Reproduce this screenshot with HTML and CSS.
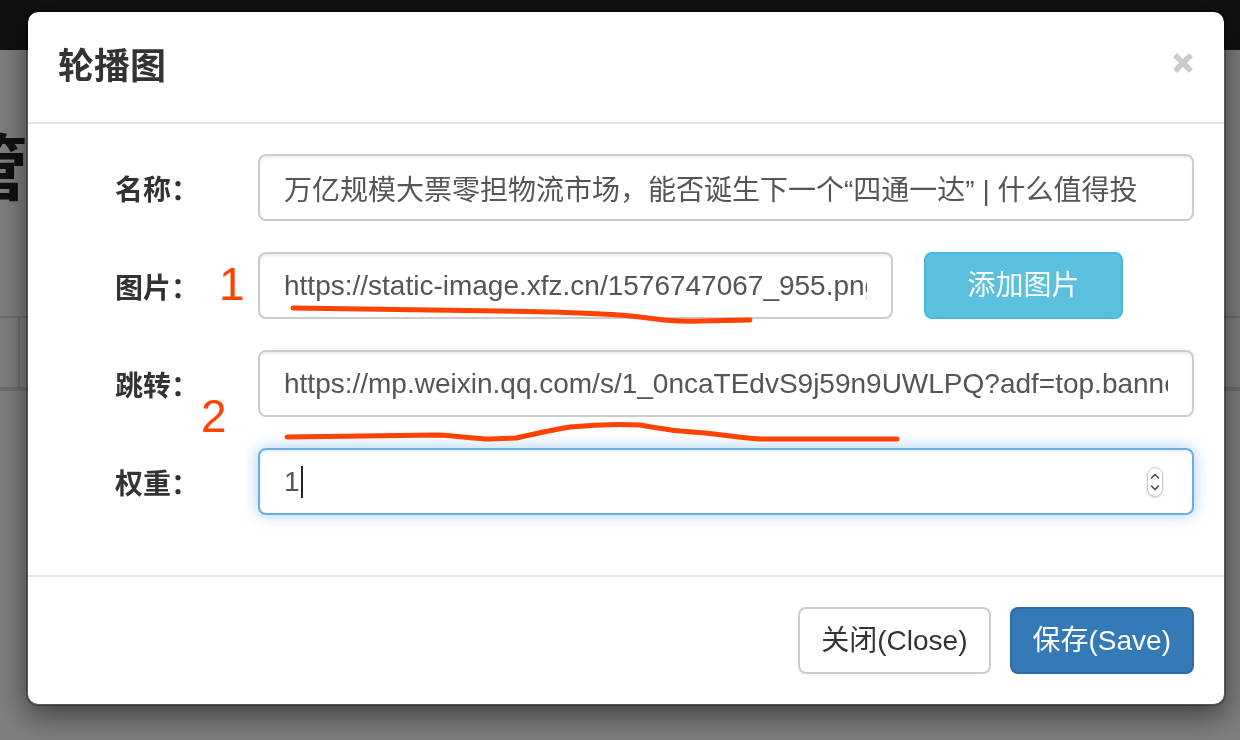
FILE: index.html
```html
<!DOCTYPE html>
<html lang="zh-CN">
<head>
<meta charset="utf-8">
<title>轮播图</title>
<link rel="stylesheet" href="styles.css">
</head>
<body>
<div class="page">
  <header class="navbar"></header>
  <main class="content">
    <h1 class="page-title">管</h1>
    <div class="grid-head">
      <div class="grid-cell first"></div>
      <div class="grid-cell"></div>
    </div>
  </main>
</div>

<div class="backdrop"></div>

<div class="modal" role="dialog">
  <div class="modal-header">
    <h4 class="modal-title">轮播图</h4>
    <button class="close" type="button" aria-label="Close">
      <svg width="22" height="22" viewBox="0 0 22 22"><path d="M3 3L19 19M19 3L3 19" stroke="#cbcbcb" stroke-width="5.4" fill="none"/></svg>
    </button>
  </div>
  <form class="modal-body">
    <div class="form-row">
      <label class="form-label">名称：</label>
      <input class="field" type="text" value="万亿规模大票零担物流市场，能否诞生下一个“四通一达” | 什么值得投" readonly>
    </div>
    <div class="form-row">
      <label class="form-label">图片：</label>
      <input class="field field-short" type="text" value="https://static-image.xfz.cn/1576747067_955.png" readonly>
      <button class="btn btn-info" type="button">添加图片</button>
    </div>
    <div class="form-row">
      <label class="form-label">跳转：</label>
      <input class="field" type="text" value="https://mp.weixin.qq.com/s/1_0ncaTEdvS9j59n9UWLPQ?adf=top.banner" readonly>
    </div>
    <div class="form-row">
      <label class="form-label">权重：</label>
      <div class="field field-focus">
        <span class="field-value">1</span><span class="caret"></span>
        <span class="spin">
          <svg width="18" height="32" viewBox="0 0 18 32">
            <rect x="1.5" y="1.5" width="15" height="29" rx="7.5" fill="#fff" stroke="#c9c9c9" stroke-width="1"/>
            <path d="M5.5 12L9 8.5L12.5 12M5.5 20L9 23.5L12.5 20" stroke="#4a4a4a" stroke-width="1.6" fill="none" stroke-linecap="round" stroke-linejoin="round"/>
          </svg>
        </span>
      </div>
    </div>
  </form>
  <div class="modal-footer">
    <button class="btn btn-default" type="button">关闭(Close)</button>
    <button class="btn btn-primary" type="button">保存(Save)</button>
  </div>
</div>

<svg class="marks" width="1240" height="740" viewBox="0 0 1240 740">
  <text class="mark-num" x="219" y="300">1</text>
  <text class="mark-num" x="201" y="432">2</text>
  <path d="M293 308 C360 309 430 310 500 311 C560 312 610 313 640 317 C660 320 680 322 700 321 L750 320" />
  <path d="M287 437 L438 435 C460 436 475 439 490 439 L516 438 C535 434 550 430 570 427 C590 425 620 424 640 425 C652 427 662 429 680 431 L705 433 C725 435 740 438 760 439 L897 439" />
</svg>
</body>
</html>
```
FILE: styles.css
```css
* {
  box-sizing: border-box;
}

html,
body {
  margin: 0;
  height: 100%;
}

body {
  font-family: "Liberation Sans", "Noto Sans CJK SC", sans-serif;
  color: #333;
  background: #fff;
  overflow: hidden;
}

/* background page */
.navbar {
  height: 50px;
  background: #222;
}

.page-title {
  margin: 83px 0 0 -44px;
  font-size: 72px;
  line-height: 72px;
  font-weight: 700;
  color: #222;
  white-space: nowrap;
}

.grid-head {
  display: flex;
  margin-top: 111px;
  height: 75px;
  border-top: 2px solid #ddd;
  border-bottom: 4px solid #ddd;
}

.grid-cell {
  flex: 1;
}

.grid-cell.first {
  flex: 0 0 20px;
  border-right: 2px solid #ddd;
}

.backdrop {
  position: fixed;
  inset: 0;
  background: rgba(0, 0, 0, 0.5);
}

/* modal */
.modal {
  position: absolute;
  top: 10px;
  left: 26px;
  width: 1200px;
  background: #fff;
  background-clip: padding-box;
  border: 2px solid rgba(0, 0, 0, 0.3);
  border-radius: 12px;
  box-shadow: 0 10px 30px rgba(0, 0, 0, 0.5);
}

.modal-header {
  display: flex;
  justify-content: space-between;
  align-items: flex-start;
  height: 112px;
  padding: 30px;
  border-bottom: 2px solid #e5e5e5;
}

.modal-title {
  margin: 0;
  font-size: 36px;
  line-height: 50px;
  font-weight: 700;
  color: #333;
}

.close {
  margin: 10px 0 0;
  padding: 0;
  border: 0;
  background: none;
  width: 22px;
  height: 22px;
  display: block;
}

.close svg {
  display: block;
}

.modal-body {
  display: flex;
  flex-direction: column;
  gap: 31px;
  margin: 0;
  padding: 30px 30px 60px;
}

.form-row {
  display: flex;
  align-items: center;
  height: 67px;
}

.form-label {
  flex: 0 0 141px;
  margin-right: 59px;
  text-align: right;
  font-size: 28px;
  font-weight: 700;
  color: #333;
  white-space: nowrap;
}

.field {
  position: relative;
  flex: 1;
  min-width: 0;
  height: 67px;
  padding: 0 24px;
  border: 2px solid #ccc;
  border-radius: 8px;
  background: #fff;
  font-family: "Liberation Sans", "Noto Sans CJK SC", sans-serif;
  font-size: 28px;
  color: #555;
  box-shadow: inset 0 2px 2px rgba(0, 0, 0, 0.075);
  outline: none;
}

.field-short {
  flex: 0 0 635px;
  margin-right: 31px;
}

.field-focus {
  display: flex;
  align-items: center;
  border-color: #66afe9;
  box-shadow: inset 0 2px 2px rgba(0, 0, 0, 0.075), 0 0 16px rgba(102, 175, 233, 0.6);
}

.field-value {
  line-height: 32px;
}

.caret {
  display: inline-block;
  width: 2px;
  height: 32px;
  margin-left: 1px;
  background: #222;
}

.spin {
  position: absolute;
  right: 28px;
  top: 16px;
  display: block;
  width: 18px;
  height: 32px;
}

.spin svg {
  display: block;
  filter: drop-shadow(0 1px 1px rgba(0, 0, 0, 0.15));
}

/* buttons */
.btn {
  height: 67px;
  padding: 0 21px;
  border: 2px solid transparent;
  border-radius: 8px;
  font-family: "Liberation Sans", "Noto Sans CJK SC", sans-serif;
  font-size: 28px;
  line-height: 1;
  white-space: nowrap;
}

.btn-info {
  flex: 0 0 199px;
  background: #5bc0de;
  border-color: #46b8da;
  color: #fff;
}

.btn-default {
  background: #fff;
  border-color: #ccc;
  color: #333;
}

.btn-primary {
  background: #337ab7;
  border-color: #2e6da4;
  color: #fff;
}

.modal-footer {
  display: flex;
  justify-content: flex-end;
  gap: 19px;
  padding: 30px;
  border-top: 2px solid #e5e5e5;
}

/* red hand annotations */
.marks {
  position: fixed;
  left: 0;
  top: 0;
  pointer-events: none;
}

.marks path {
  fill: none;
  stroke: #ff4200;
  stroke-width: 5;
  stroke-linecap: round;
  stroke-linejoin: round;
}

.mark-num {
  font-family: "Liberation Sans", sans-serif;
  font-size: 46px;
  fill: #ff4200;
}
```
